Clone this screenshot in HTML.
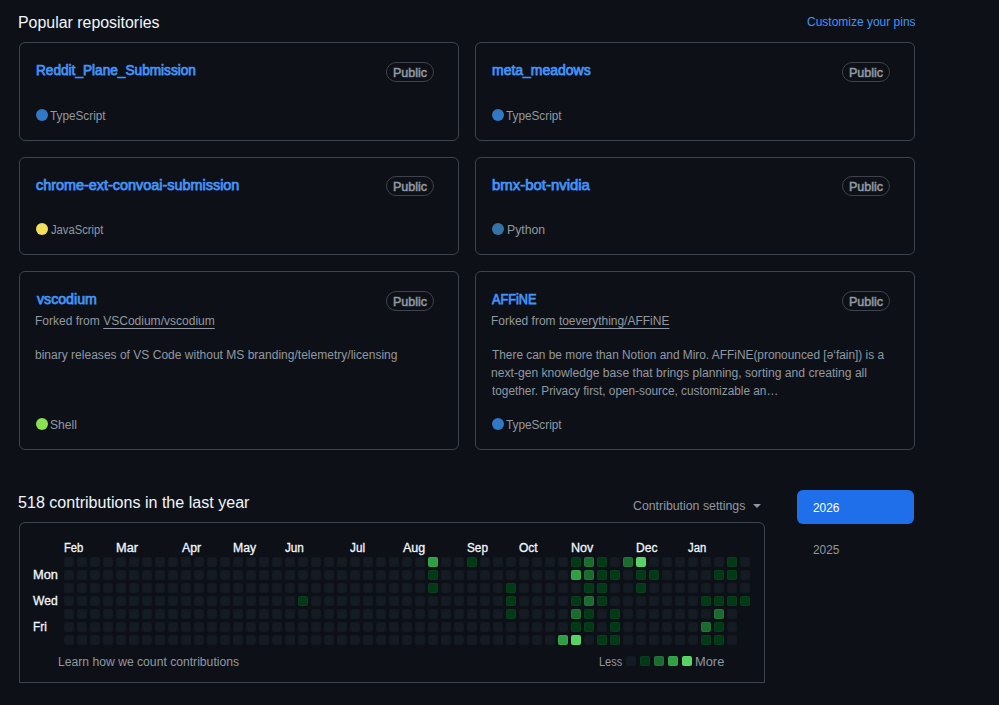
<!DOCTYPE html>
<html lang="en"><head><meta charset="utf-8"><title>Profile</title>
<style>
html,body{margin:0;padding:0;background:#0d1117;}
body{width:999px;height:705px;position:relative;overflow:hidden;font-family:"Liberation Sans",sans-serif;color:#f0f6fc;}
.t{position:absolute;white-space:nowrap;line-height:1;transform-origin:0 0;}
.card{position:absolute;box-sizing:border-box;border:1px solid #3d444d;border-radius:6px;}
.h{font-size:16px;color:#f0f6fc;}
.name{font-size:14px;color:#4493f8;-webkit-text-stroke:0.75px #4493f8;}
.badge{position:absolute;box-sizing:border-box;width:48px;height:20px;border:1px solid #3d444d;border-radius:10px;}
.bt{font-size:12px;color:#9198a1;-webkit-text-stroke:0.5px #9198a1;}
.dot{position:absolute;width:12px;height:12px;border-radius:50%;}
.muted{color:#9198a1;}
.link{color:#4493f8;}
.white{color:#fff;}
.f12{font-size:12px;}
.lab{font-size:12px;color:#f0f6fc;-webkit-text-stroke:0.3px #f0f6fc;}
.c{position:absolute;width:10px;height:10px;border-radius:2px;box-shadow:inset 0 0 0 1px rgba(255,255,255,0.05);}
.l0{background:#151b23;box-shadow:inset 0 0 0 1px rgba(1,4,9,0.05);}
.l1{background:#033a16;box-shadow:inset 0 0 0 1px rgba(255,255,255,0.025);}
.l2{background:#196c2e;}
.l3{background:#2ea043;}
.l4{background:#56d364;}
u{text-decoration:underline;text-decoration-thickness:1px;text-underline-offset:3px;}
</style></head><body>
<div class="card" style="left:19px;top:42px;width:440px;height:99px"></div>
<div class="card" style="left:475px;top:42px;width:440px;height:99px"></div>
<div class="card" style="left:19px;top:157px;width:440px;height:98px"></div>
<div class="card" style="left:475px;top:157px;width:440px;height:98px"></div>
<div class="card" style="left:19px;top:271px;width:440px;height:179px"></div>
<div class="card" style="left:475px;top:271px;width:440px;height:179px"></div>

<div class="badge" style="left:386px;top:62px"></div>
<div class="badge" style="left:842px;top:62px"></div>
<div class="badge" style="left:386px;top:176px"></div>
<div class="badge" style="left:842px;top:176px"></div>
<div class="badge" style="left:386px;top:291px"></div>
<div class="badge" style="left:842px;top:291px"></div>

<i class="dot" style="left:36px;top:109px;background:#3178c6"></i>
<i class="dot" style="left:492px;top:109px;background:#3178c6"></i>
<i class="dot" style="left:36px;top:223px;background:#f1e05a"></i>
<i class="dot" style="left:492px;top:223px;background:#3572a5"></i>
<i class="dot" style="left:36px;top:418px;background:#89e051"></i>
<i class="dot" style="left:492px;top:418px;background:#3178c6"></i>

<svg style="position:absolute;left:753px;top:504px" width="8" height="4"><path d="M0 0h8L4 4z" fill="#9198a1"/></svg>
<div class="card" style="left:19px;top:522px;width:746px;height:161px;border-radius:6px 6px 0 0"></div>
<i class="c l0" style="left:64px;top:557px"></i><i class="c l0" style="left:64px;top:570px"></i><i class="c l0" style="left:64px;top:583px"></i><i class="c l0" style="left:64px;top:596px"></i><i class="c l0" style="left:64px;top:609px"></i><i class="c l0" style="left:64px;top:622px"></i><i class="c l0" style="left:64px;top:635px"></i><i class="c l0" style="left:77px;top:557px"></i><i class="c l0" style="left:77px;top:570px"></i><i class="c l0" style="left:77px;top:583px"></i><i class="c l0" style="left:77px;top:596px"></i><i class="c l0" style="left:77px;top:609px"></i><i class="c l0" style="left:77px;top:622px"></i><i class="c l0" style="left:77px;top:635px"></i><i class="c l0" style="left:90px;top:557px"></i><i class="c l0" style="left:90px;top:570px"></i><i class="c l0" style="left:90px;top:583px"></i><i class="c l0" style="left:90px;top:596px"></i><i class="c l0" style="left:90px;top:609px"></i><i class="c l0" style="left:90px;top:622px"></i><i class="c l0" style="left:90px;top:635px"></i><i class="c l0" style="left:103px;top:557px"></i><i class="c l0" style="left:103px;top:570px"></i><i class="c l0" style="left:103px;top:583px"></i><i class="c l0" style="left:103px;top:596px"></i><i class="c l0" style="left:103px;top:609px"></i><i class="c l0" style="left:103px;top:622px"></i><i class="c l0" style="left:103px;top:635px"></i><i class="c l0" style="left:116px;top:557px"></i><i class="c l0" style="left:116px;top:570px"></i><i class="c l0" style="left:116px;top:583px"></i><i class="c l0" style="left:116px;top:596px"></i><i class="c l0" style="left:116px;top:609px"></i><i class="c l0" style="left:116px;top:622px"></i><i class="c l0" style="left:116px;top:635px"></i><i class="c l0" style="left:129px;top:557px"></i><i class="c l0" style="left:129px;top:570px"></i><i class="c l0" style="left:129px;top:583px"></i><i class="c l0" style="left:129px;top:596px"></i><i class="c l0" style="left:129px;top:609px"></i><i class="c l0" style="left:129px;top:622px"></i><i class="c l0" style="left:129px;top:635px"></i><i class="c l0" style="left:142px;top:557px"></i><i class="c l0" style="left:142px;top:570px"></i><i class="c l0" style="left:142px;top:583px"></i><i class="c l0" style="left:142px;top:596px"></i><i class="c l0" style="left:142px;top:609px"></i><i class="c l0" style="left:142px;top:622px"></i><i class="c l0" style="left:142px;top:635px"></i><i class="c l0" style="left:155px;top:557px"></i><i class="c l0" style="left:155px;top:570px"></i><i class="c l0" style="left:155px;top:583px"></i><i class="c l0" style="left:155px;top:596px"></i><i class="c l0" style="left:155px;top:609px"></i><i class="c l0" style="left:155px;top:622px"></i><i class="c l0" style="left:155px;top:635px"></i><i class="c l0" style="left:168px;top:557px"></i><i class="c l0" style="left:168px;top:570px"></i><i class="c l0" style="left:168px;top:583px"></i><i class="c l0" style="left:168px;top:596px"></i><i class="c l0" style="left:168px;top:609px"></i><i class="c l0" style="left:168px;top:622px"></i><i class="c l0" style="left:168px;top:635px"></i><i class="c l0" style="left:181px;top:557px"></i><i class="c l0" style="left:181px;top:570px"></i><i class="c l0" style="left:181px;top:583px"></i><i class="c l0" style="left:181px;top:596px"></i><i class="c l0" style="left:181px;top:609px"></i><i class="c l0" style="left:181px;top:622px"></i><i class="c l0" style="left:181px;top:635px"></i><i class="c l0" style="left:194px;top:557px"></i><i class="c l0" style="left:194px;top:570px"></i><i class="c l0" style="left:194px;top:583px"></i><i class="c l0" style="left:194px;top:596px"></i><i class="c l0" style="left:194px;top:609px"></i><i class="c l0" style="left:194px;top:622px"></i><i class="c l0" style="left:194px;top:635px"></i><i class="c l0" style="left:207px;top:557px"></i><i class="c l0" style="left:207px;top:570px"></i><i class="c l0" style="left:207px;top:583px"></i><i class="c l0" style="left:207px;top:596px"></i><i class="c l0" style="left:207px;top:609px"></i><i class="c l0" style="left:207px;top:622px"></i><i class="c l0" style="left:207px;top:635px"></i><i class="c l0" style="left:220px;top:557px"></i><i class="c l0" style="left:220px;top:570px"></i><i class="c l0" style="left:220px;top:583px"></i><i class="c l0" style="left:220px;top:596px"></i><i class="c l0" style="left:220px;top:609px"></i><i class="c l0" style="left:220px;top:622px"></i><i class="c l0" style="left:220px;top:635px"></i><i class="c l0" style="left:233px;top:557px"></i><i class="c l0" style="left:233px;top:570px"></i><i class="c l0" style="left:233px;top:583px"></i><i class="c l0" style="left:233px;top:596px"></i><i class="c l0" style="left:233px;top:609px"></i><i class="c l0" style="left:233px;top:622px"></i><i class="c l0" style="left:233px;top:635px"></i><i class="c l0" style="left:246px;top:557px"></i><i class="c l0" style="left:246px;top:570px"></i><i class="c l0" style="left:246px;top:583px"></i><i class="c l0" style="left:246px;top:596px"></i><i class="c l0" style="left:246px;top:609px"></i><i class="c l0" style="left:246px;top:622px"></i><i class="c l0" style="left:246px;top:635px"></i><i class="c l0" style="left:259px;top:557px"></i><i class="c l0" style="left:259px;top:570px"></i><i class="c l0" style="left:259px;top:583px"></i><i class="c l0" style="left:259px;top:596px"></i><i class="c l0" style="left:259px;top:609px"></i><i class="c l0" style="left:259px;top:622px"></i><i class="c l0" style="left:259px;top:635px"></i><i class="c l0" style="left:272px;top:557px"></i><i class="c l0" style="left:272px;top:570px"></i><i class="c l0" style="left:272px;top:583px"></i><i class="c l0" style="left:272px;top:596px"></i><i class="c l0" style="left:272px;top:609px"></i><i class="c l0" style="left:272px;top:622px"></i><i class="c l0" style="left:272px;top:635px"></i><i class="c l0" style="left:285px;top:557px"></i><i class="c l0" style="left:285px;top:570px"></i><i class="c l0" style="left:285px;top:583px"></i><i class="c l0" style="left:285px;top:596px"></i><i class="c l0" style="left:285px;top:609px"></i><i class="c l0" style="left:285px;top:622px"></i><i class="c l0" style="left:285px;top:635px"></i><i class="c l0" style="left:298px;top:557px"></i><i class="c l0" style="left:298px;top:570px"></i><i class="c l0" style="left:298px;top:583px"></i><i class="c l1" style="left:298px;top:596px"></i><i class="c l0" style="left:298px;top:609px"></i><i class="c l0" style="left:298px;top:622px"></i><i class="c l0" style="left:298px;top:635px"></i><i class="c l0" style="left:311px;top:557px"></i><i class="c l0" style="left:311px;top:570px"></i><i class="c l0" style="left:311px;top:583px"></i><i class="c l0" style="left:311px;top:596px"></i><i class="c l0" style="left:311px;top:609px"></i><i class="c l0" style="left:311px;top:622px"></i><i class="c l0" style="left:311px;top:635px"></i><i class="c l0" style="left:324px;top:557px"></i><i class="c l0" style="left:324px;top:570px"></i><i class="c l0" style="left:324px;top:583px"></i><i class="c l0" style="left:324px;top:596px"></i><i class="c l0" style="left:324px;top:609px"></i><i class="c l0" style="left:324px;top:622px"></i><i class="c l0" style="left:324px;top:635px"></i><i class="c l0" style="left:337px;top:557px"></i><i class="c l0" style="left:337px;top:570px"></i><i class="c l0" style="left:337px;top:583px"></i><i class="c l0" style="left:337px;top:596px"></i><i class="c l0" style="left:337px;top:609px"></i><i class="c l0" style="left:337px;top:622px"></i><i class="c l0" style="left:337px;top:635px"></i><i class="c l0" style="left:350px;top:557px"></i><i class="c l0" style="left:350px;top:570px"></i><i class="c l0" style="left:350px;top:583px"></i><i class="c l0" style="left:350px;top:596px"></i><i class="c l0" style="left:350px;top:609px"></i><i class="c l0" style="left:350px;top:622px"></i><i class="c l0" style="left:350px;top:635px"></i><i class="c l0" style="left:363px;top:557px"></i><i class="c l0" style="left:363px;top:570px"></i><i class="c l0" style="left:363px;top:583px"></i><i class="c l0" style="left:363px;top:596px"></i><i class="c l0" style="left:363px;top:609px"></i><i class="c l0" style="left:363px;top:622px"></i><i class="c l0" style="left:363px;top:635px"></i><i class="c l0" style="left:376px;top:557px"></i><i class="c l0" style="left:376px;top:570px"></i><i class="c l0" style="left:376px;top:583px"></i><i class="c l0" style="left:376px;top:596px"></i><i class="c l0" style="left:376px;top:609px"></i><i class="c l0" style="left:376px;top:622px"></i><i class="c l0" style="left:376px;top:635px"></i><i class="c l0" style="left:389px;top:557px"></i><i class="c l0" style="left:389px;top:570px"></i><i class="c l0" style="left:389px;top:583px"></i><i class="c l0" style="left:389px;top:596px"></i><i class="c l0" style="left:389px;top:609px"></i><i class="c l0" style="left:389px;top:622px"></i><i class="c l0" style="left:389px;top:635px"></i><i class="c l0" style="left:402px;top:557px"></i><i class="c l0" style="left:402px;top:570px"></i><i class="c l0" style="left:402px;top:583px"></i><i class="c l0" style="left:402px;top:596px"></i><i class="c l0" style="left:402px;top:609px"></i><i class="c l0" style="left:402px;top:622px"></i><i class="c l0" style="left:402px;top:635px"></i><i class="c l0" style="left:415px;top:557px"></i><i class="c l0" style="left:415px;top:570px"></i><i class="c l0" style="left:415px;top:583px"></i><i class="c l0" style="left:415px;top:596px"></i><i class="c l0" style="left:415px;top:609px"></i><i class="c l0" style="left:415px;top:622px"></i><i class="c l0" style="left:415px;top:635px"></i><i class="c l3" style="left:428px;top:557px"></i><i class="c l1" style="left:428px;top:570px"></i><i class="c l1" style="left:428px;top:583px"></i><i class="c l0" style="left:428px;top:596px"></i><i class="c l0" style="left:428px;top:609px"></i><i class="c l0" style="left:428px;top:622px"></i><i class="c l0" style="left:428px;top:635px"></i><i class="c l0" style="left:441px;top:557px"></i><i class="c l0" style="left:441px;top:570px"></i><i class="c l0" style="left:441px;top:583px"></i><i class="c l0" style="left:441px;top:596px"></i><i class="c l0" style="left:441px;top:609px"></i><i class="c l0" style="left:441px;top:622px"></i><i class="c l0" style="left:441px;top:635px"></i><i class="c l0" style="left:454px;top:557px"></i><i class="c l0" style="left:454px;top:570px"></i><i class="c l0" style="left:454px;top:583px"></i><i class="c l0" style="left:454px;top:596px"></i><i class="c l0" style="left:454px;top:609px"></i><i class="c l0" style="left:454px;top:622px"></i><i class="c l0" style="left:454px;top:635px"></i><i class="c l1" style="left:467px;top:557px"></i><i class="c l0" style="left:467px;top:570px"></i><i class="c l0" style="left:467px;top:583px"></i><i class="c l0" style="left:467px;top:596px"></i><i class="c l0" style="left:467px;top:609px"></i><i class="c l0" style="left:467px;top:622px"></i><i class="c l0" style="left:467px;top:635px"></i><i class="c l0" style="left:480px;top:557px"></i><i class="c l0" style="left:480px;top:570px"></i><i class="c l0" style="left:480px;top:583px"></i><i class="c l0" style="left:480px;top:596px"></i><i class="c l0" style="left:480px;top:609px"></i><i class="c l0" style="left:480px;top:622px"></i><i class="c l0" style="left:480px;top:635px"></i><i class="c l0" style="left:493px;top:557px"></i><i class="c l0" style="left:493px;top:570px"></i><i class="c l0" style="left:493px;top:583px"></i><i class="c l0" style="left:493px;top:596px"></i><i class="c l0" style="left:493px;top:609px"></i><i class="c l0" style="left:493px;top:622px"></i><i class="c l0" style="left:493px;top:635px"></i><i class="c l0" style="left:506px;top:557px"></i><i class="c l0" style="left:506px;top:570px"></i><i class="c l1" style="left:506px;top:583px"></i><i class="c l1" style="left:506px;top:596px"></i><i class="c l1" style="left:506px;top:609px"></i><i class="c l0" style="left:506px;top:622px"></i><i class="c l0" style="left:506px;top:635px"></i><i class="c l0" style="left:519px;top:557px"></i><i class="c l0" style="left:519px;top:570px"></i><i class="c l0" style="left:519px;top:583px"></i><i class="c l0" style="left:519px;top:596px"></i><i class="c l0" style="left:519px;top:609px"></i><i class="c l0" style="left:519px;top:622px"></i><i class="c l0" style="left:519px;top:635px"></i><i class="c l0" style="left:532px;top:557px"></i><i class="c l0" style="left:532px;top:570px"></i><i class="c l0" style="left:532px;top:583px"></i><i class="c l0" style="left:532px;top:596px"></i><i class="c l0" style="left:532px;top:609px"></i><i class="c l0" style="left:532px;top:622px"></i><i class="c l0" style="left:532px;top:635px"></i><i class="c l0" style="left:545px;top:557px"></i><i class="c l0" style="left:545px;top:570px"></i><i class="c l0" style="left:545px;top:583px"></i><i class="c l0" style="left:545px;top:596px"></i><i class="c l0" style="left:545px;top:609px"></i><i class="c l0" style="left:545px;top:622px"></i><i class="c l0" style="left:545px;top:635px"></i><i class="c l0" style="left:558px;top:557px"></i><i class="c l0" style="left:558px;top:570px"></i><i class="c l0" style="left:558px;top:583px"></i><i class="c l0" style="left:558px;top:596px"></i><i class="c l0" style="left:558px;top:609px"></i><i class="c l0" style="left:558px;top:622px"></i><i class="c l3" style="left:558px;top:635px"></i><i class="c l1" style="left:571px;top:557px"></i><i class="c l3" style="left:571px;top:570px"></i><i class="c l0" style="left:571px;top:583px"></i><i class="c l1" style="left:571px;top:596px"></i><i class="c l2" style="left:571px;top:609px"></i><i class="c l1" style="left:571px;top:622px"></i><i class="c l4" style="left:571px;top:635px"></i><i class="c l2" style="left:584px;top:557px"></i><i class="c l2" style="left:584px;top:570px"></i><i class="c l1" style="left:584px;top:583px"></i><i class="c l2" style="left:584px;top:596px"></i><i class="c l1" style="left:584px;top:609px"></i><i class="c l1" style="left:584px;top:622px"></i><i class="c l0" style="left:584px;top:635px"></i><i class="c l1" style="left:597px;top:557px"></i><i class="c l1" style="left:597px;top:570px"></i><i class="c l1" style="left:597px;top:583px"></i><i class="c l1" style="left:597px;top:596px"></i><i class="c l0" style="left:597px;top:609px"></i><i class="c l0" style="left:597px;top:622px"></i><i class="c l1" style="left:597px;top:635px"></i><i class="c l0" style="left:610px;top:557px"></i><i class="c l1" style="left:610px;top:570px"></i><i class="c l0" style="left:610px;top:583px"></i><i class="c l0" style="left:610px;top:596px"></i><i class="c l1" style="left:610px;top:609px"></i><i class="c l1" style="left:610px;top:622px"></i><i class="c l1" style="left:610px;top:635px"></i><i class="c l2" style="left:623px;top:557px"></i><i class="c l0" style="left:623px;top:570px"></i><i class="c l0" style="left:623px;top:583px"></i><i class="c l0" style="left:623px;top:596px"></i><i class="c l0" style="left:623px;top:609px"></i><i class="c l0" style="left:623px;top:622px"></i><i class="c l0" style="left:623px;top:635px"></i><i class="c l4" style="left:636px;top:557px"></i><i class="c l1" style="left:636px;top:570px"></i><i class="c l1" style="left:636px;top:583px"></i><i class="c l0" style="left:636px;top:596px"></i><i class="c l0" style="left:636px;top:609px"></i><i class="c l0" style="left:636px;top:622px"></i><i class="c l0" style="left:636px;top:635px"></i><i class="c l0" style="left:649px;top:557px"></i><i class="c l1" style="left:649px;top:570px"></i><i class="c l0" style="left:649px;top:583px"></i><i class="c l0" style="left:649px;top:596px"></i><i class="c l0" style="left:649px;top:609px"></i><i class="c l0" style="left:649px;top:622px"></i><i class="c l0" style="left:649px;top:635px"></i><i class="c l0" style="left:662px;top:557px"></i><i class="c l0" style="left:662px;top:570px"></i><i class="c l0" style="left:662px;top:583px"></i><i class="c l0" style="left:662px;top:596px"></i><i class="c l0" style="left:662px;top:609px"></i><i class="c l0" style="left:662px;top:622px"></i><i class="c l0" style="left:662px;top:635px"></i><i class="c l0" style="left:675px;top:557px"></i><i class="c l0" style="left:675px;top:570px"></i><i class="c l0" style="left:675px;top:583px"></i><i class="c l0" style="left:675px;top:596px"></i><i class="c l0" style="left:675px;top:609px"></i><i class="c l0" style="left:675px;top:622px"></i><i class="c l0" style="left:675px;top:635px"></i><i class="c l0" style="left:688px;top:557px"></i><i class="c l0" style="left:688px;top:570px"></i><i class="c l0" style="left:688px;top:583px"></i><i class="c l0" style="left:688px;top:596px"></i><i class="c l0" style="left:688px;top:609px"></i><i class="c l0" style="left:688px;top:622px"></i><i class="c l0" style="left:688px;top:635px"></i><i class="c l0" style="left:701px;top:557px"></i><i class="c l0" style="left:701px;top:570px"></i><i class="c l0" style="left:701px;top:583px"></i><i class="c l1" style="left:701px;top:596px"></i><i class="c l0" style="left:701px;top:609px"></i><i class="c l2" style="left:701px;top:622px"></i><i class="c l1" style="left:701px;top:635px"></i><i class="c l0" style="left:714px;top:557px"></i><i class="c l1" style="left:714px;top:570px"></i><i class="c l0" style="left:714px;top:583px"></i><i class="c l1" style="left:714px;top:596px"></i><i class="c l2" style="left:714px;top:609px"></i><i class="c l1" style="left:714px;top:622px"></i><i class="c l1" style="left:714px;top:635px"></i><i class="c l1" style="left:727px;top:557px"></i><i class="c l1" style="left:727px;top:570px"></i><i class="c l0" style="left:727px;top:583px"></i><i class="c l1" style="left:727px;top:596px"></i><i class="c l0" style="left:727px;top:609px"></i><i class="c l0" style="left:727px;top:622px"></i><i class="c l0" style="left:727px;top:635px"></i><i class="c l0" style="left:740px;top:557px"></i><i class="c l0" style="left:740px;top:570px"></i><i class="c l0" style="left:740px;top:583px"></i><i class="c l1" style="left:740px;top:596px"></i>
<i class="c l0" style="left:626px;top:656px"></i>
<i class="c l1" style="left:640px;top:656px"></i>
<i class="c l2" style="left:654px;top:656px"></i>
<i class="c l3" style="left:668px;top:656px"></i>
<i class="c l4" style="left:682px;top:656px"></i>
<div style="position:absolute;left:797px;top:490px;width:117px;height:34px;background:#1f6feb;border-radius:6px"></div>
<div class="t h" id="h1" style="left:18.28px;top:15px;transform:scaleX(0.9942);">Popular repositories</div>
<div class="t f12 link" id="cust" style="left:807.11px;top:16px;transform:scaleX(0.9985);">Customize your pins</div>
<div class="t name" id="n1" style="left:36.04px;top:63px;transform:scaleX(0.9739);">Reddit_Plane_Submission</div>
<div class="t name" id="n2" style="left:492.33px;top:63px;transform:scaleX(0.9978);">meta_meadows</div>
<div class="t name" id="n3" style="left:35.68px;top:178px;transform:scaleX(1.0290);">chrome-ext-convoai-submission</div>
<div class="t name" id="n4" style="left:492.32px;top:178px;transform:scaleX(1.0661);">bmx-bot-nvidia</div>
<div class="t name" id="n5" style="left:37.00px;top:292px;transform:scaleX(1.0115);">vscodium</div>
<div class="t name" id="n6" style="left:491.83px;top:292px;transform:scaleX(0.9079);">AFFiNE</div>
<div class="t bt" id="b1" style="left:392.62px;top:67px;transform:scaleX(1.0413);">Public</div>
<div class="t bt" id="b2" style="left:848.62px;top:67px;transform:scaleX(1.0413);">Public</div>
<div class="t bt" id="b3" style="left:392.62px;top:181px;transform:scaleX(1.0413);">Public</div>
<div class="t bt" id="b4" style="left:848.62px;top:181px;transform:scaleX(1.0413);">Public</div>
<div class="t bt" id="b5" style="left:392.62px;top:296px;transform:scaleX(1.0413);">Public</div>
<div class="t bt" id="b6" style="left:848.62px;top:296px;transform:scaleX(1.0413);">Public</div>
<div class="t f12 muted" id="l1" style="left:50.28px;top:110px;transform:scaleX(0.9805);">TypeScript</div>
<div class="t f12 muted" id="l2" style="left:506.28px;top:110px;transform:scaleX(0.9805);">TypeScript</div>
<div class="t f12 muted" id="l3" style="left:51.26px;top:224px;transform:scaleX(0.9361);">JavaScript</div>
<div class="t f12 muted" id="l4" style="left:506.63px;top:224px;transform:scaleX(1.0220);">Python</div>
<div class="t f12 muted" id="l5" style="left:50.12px;top:419px;transform:scaleX(1.0079);">Shell</div>
<div class="t f12 muted" id="l6" style="left:506.28px;top:419px;transform:scaleX(0.9805);">TypeScript</div>
<div class="t f12 muted" id="f5" style="left:34.81px;top:315px;transform:scaleX(1.0021);">Forked from <u>VSCodium/vscodium</u></div>
<div class="t f12 muted" id="f6" style="left:490.81px;top:315px;transform:scaleX(0.9980);">Forked from <u>toeverything/AFFiNE</u></div>
<div class="t f12 muted" id="d5" style="left:34.60px;top:349px;transform:scaleX(1.0026);">binary releases of VS Code without MS branding/telemetry/licensing</div>
<div class="t f12 muted" id="d6a" style="left:492.47px;top:349px;transform:scaleX(0.9896);">There can be more than Notion and Miro. AFFiNE(pronounced [ə‘fain]) is a</div>
<div class="t f12 muted" id="d6b" style="left:490.59px;top:367px;transform:scaleX(1.0101);">next-gen knowledge base that brings planning, sorting and creating all</div>
<div class="t f12 muted" id="d6c" style="left:492.31px;top:385px;transform:scaleX(0.9842);">together. Privacy first, open-source, customizable an…</div>
<div class="t h" id="h2" style="left:18.15px;top:495px;transform:scaleX(1.0047);">518 contributions in the last year</div>
<div class="t f12 muted" id="cs" style="left:633.29px;top:500px;transform:scaleX(1.0273);">Contribution settings</div>
<div class="t lab" id="mFeb" style="left:64.40px;top:542px;transform:scaleX(0.9336);">Feb</div>
<div class="t lab" id="mMar" style="left:116.20px;top:542px;transform:scaleX(1.0630);">Mar</div>
<div class="t lab" id="mApr" style="left:181.98px;top:542px;transform:scaleX(1.0243);">Apr</div>
<div class="t lab" id="mMay" style="left:233.28px;top:542px;transform:scaleX(1.0158);">May</div>
<div class="t lab" id="mJun" style="left:285.32px;top:542px;transform:scaleX(0.9762);">Jun</div>
<div class="t lab" id="mJul" style="left:350.32px;top:542px;transform:scaleX(0.9836);">Jul</div>
<div class="t lab" id="mAug" style="left:402.99px;top:542px;transform:scaleX(1.0380);">Aug</div>
<div class="t lab" id="mSep" style="left:467.43px;top:542px;transform:scaleX(0.9804);">Sep</div>
<div class="t lab" id="mOct" style="left:519.14px;top:542px;transform:scaleX(1.0007);">Oct</div>
<div class="t lab" id="mNov" style="left:571.26px;top:542px;transform:scaleX(1.0480);">Nov</div>
<div class="t lab" id="mDec" style="left:636.29px;top:542px;transform:scaleX(1.0026);">Dec</div>
<div class="t lab" id="mJan" style="left:688.34px;top:542px;transform:scaleX(0.9393);">Jan</div>
<div class="t lab" id="mon" style="left:33.11px;top:569px;transform:scaleX(1.0689);">Mon</div>
<div class="t lab" id="wed" style="left:32.60px;top:595px;transform:scaleX(1.0058);">Wed</div>
<div class="t lab" id="fri" style="left:32.91px;top:621px;transform:scaleX(0.9864);">Fri</div>
<div class="t f12 muted" id="learn" style="left:57.97px;top:656px;transform:scaleX(1.0127);">Learn how we count contributions</div>
<div class="t f12 muted" id="less" style="left:599.23px;top:656px;transform:scaleX(0.9124);">Less</div>
<div class="t f12 muted" id="more" style="left:695.32px;top:656px;transform:scaleX(1.0706);">More</div>
<div class="t f12 white" id="y1" style="left:812.98px;top:502px;transform:scaleX(0.9926);">2026</div>
<div class="t f12 muted" id="y2" style="left:813.48px;top:544px;transform:scaleX(0.9872);">2025</div>
</body></html>
